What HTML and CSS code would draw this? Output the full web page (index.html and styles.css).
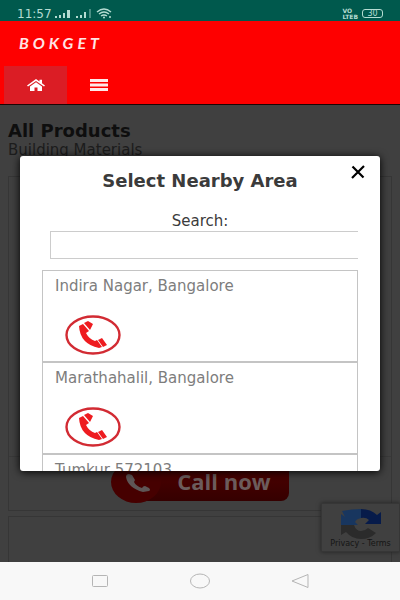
FILE: index.html
```html
<!DOCTYPE html>
<html lang="en">
<head>
<meta charset="utf-8">
<meta name="viewport" content="width=device-width, initial-scale=1">
<title>Bokget</title>
<link rel="stylesheet" href="styles.css">
</head>
<body>
<div class="status">
  <span class="clock">11:57</span>
  <svg class="signals" width="60" height="12" viewBox="0 0 60 12" fill="#b5dcd2">
    <path d="M1 8h2v2H1zM5 7h2v3H5zM9 5h2v5H9zM13 2h3v8h-3zM22 8h2v2h-2zM26 7h2v3h-2zM30 4h2v6h-2z"/>
    <path d="M35 1h2v9h-2z" opacity=".4"/>
    <path d="M43 4q7-6 14 0M45 6q5-4 10 0M47 8q3-2 6 0" fill="none" stroke="#b5dcd2" stroke-width="1.4"/>
    <circle cx="50" cy="9.500" r="1"/><circle cx="56" cy="9" r="1"/>
  </svg>
  <span class="volte">VO<br>LTE<b>B</b></span>
  <span class="battery">30</span>
</div>
<header>
  <a class="brand" href="#">BOKGET</a>
  <nav class="tabs">
    <a class="tab active" href="#" aria-label="Home">
      <svg width="18" height="12" viewBox="0 0 18 12" fill="#fff"><path d="M9 0 0 6.500l1 1L9 2l8 5.500 1-1-3-2.200V.8h-2.500v1.700z"/><path d="M9 3.200 3 7.400V12h4.500V8.500h3V12H15V7.400z"/></svg>
    </a>
    <button class="tab" type="button" aria-label="Menu">
      <svg width="18" height="12" viewBox="0 0 18 12" fill="#ffe9e9"><path d="M0 0h18v3H0zM0 4.500h18v3H0zM0 9h18v3H0z"/></svg>
    </button>
  </nav>
</header>
<main>
  <h1>All Products</h1>
  <p class="category">Building Materials</p>
  <section class="card">
    <div class="photo"></div>
    <div class="action">
      <button class="call" type="button">
        <svg width="50" height="42" viewBox="0 0 50 42"><ellipse cx="25" cy="21" rx="25" ry="21" fill="#460000"/><path d="M18 13q-3 0-3 3 2 11 17 15l6-1q2-1 0-3l-4-2q-2 0-3 2-6-2-8-6l1-2-3-5z" fill="#5e5656"/></svg>
        <span>Call now</span>
      </button>
    </div>
  </section>
  <section class="card next"></section>
  <aside class="captcha">
    <svg width="42" height="30" viewBox="0 0 42 30">
      <path d="M1 16V5l4 3-3-6q10-2 19-2v9q-5 1-6 4l3 3z" fill="#18365f"/>
      <path d="M21 0q10 0 16 6l4-3v12H25l4-4q-3-3-8-2z" fill="#071b4a"/>
      <path d="M1 16h13q2 6 7 6 4 0 7-3l8 5q-6 6-15 6-9 0-15-7l-5 3z" fill="#2b2b2b"/>
    </svg>
    <small><a href="#">Privacy</a> - <a href="#">Terms</a></small>
  </aside>
  <div class="overlay">
    <div class="dialog" role="dialog" aria-modal="true" aria-labelledby="title">
      <button class="close" type="button" aria-label="Close">
        <svg width="14" height="14" viewBox="0 0 14 14"><path d="M1.500 1.500 12.500 12.500M13 1 1 13" stroke="#000" stroke-width="2.200"/></svg>
      </button>
      <h2 id="title">Select Nearby Area</h2>
      <div class="scroller">
        <label for="search">Search:</label>
        <input id="search" type="text">
        <ul class="areas">
          <li><span>Indira Nagar, Bangalore</span>
            <a href="#" aria-label="Call Indira Nagar"><svg width="56" height="40" viewBox="0 0 56 40"><ellipse cx="28" cy="20" rx="26.500" ry="18.500" fill="#fff" stroke="#d22b33" stroke-width="2.400"/><path d="M14 11 18 9 24 16 21 18Q24 24 30 26L32 25 37 32 34 33Q15 29 14 11Z" fill="#ee1c20"/><path d="M19 8 23 6 28 9 25 15ZM33 25 37 23 42 30 38 32Z" fill="#ee1c20"/></svg></a></li>
          <li><span>Marathahalil, Bangalore</span>
            <a href="#" aria-label="Call Marathahalil"><svg width="56" height="40" viewBox="0 0 56 40"><ellipse cx="28" cy="20" rx="26.500" ry="18.500" fill="#fff" stroke="#d22b33" stroke-width="2.400"/><path d="M14 11 18 9 24 16 21 18Q24 24 30 26L32 25 37 32 34 33Q15 29 14 11Z" fill="#ee1c20"/><path d="M19 8 23 6 28 9 25 15ZM33 25 37 23 42 30 38 32Z" fill="#ee1c20"/></svg></a></li>
          <li><span>Tumkur 572103</span></li>
        </ul>
      </div>
    </div>
  </div>
</main>
<footer class="system">
  <button type="button" aria-label="Recent apps"><svg width="20" height="16" viewBox="0 0 20 16"><rect x="2.500" y="2.500" width="15" height="11" rx="1"/></svg></button>
  <button type="button" aria-label="Home screen"><svg width="20" height="16" viewBox="0 0 20 16"><ellipse cx="10" cy="8" rx="9.500" ry="7"/></svg></button>
  <button type="button" aria-label="Back"><svg width="20" height="16" viewBox="0 0 20 16"><path d="M18 1.500v13L2 8z"/></svg></button>
</footer>
</body>
</html>
```

FILE: styles.css
```css
* { box-sizing: border-box; }
body {
  margin: 0;
  min-height: 100vh;
  display: flex;
  flex-direction: column;
  font-family: "DejaVu Sans", sans-serif;
  font-size: 15px;
  line-height: 18px;
}
button { border: 0; padding: 0; background: none; font: inherit; }
a { color: inherit; text-decoration: none; }
svg { display: block; }

.status {
  height: 21px;
  padding: 6px 17px 0;
  display: flex;
  align-items: center;
  background: #00594d;
  color: #b5dcd2;
}
.clock { font-size: 12px; line-height: 14px; }
.signals { margin-left: 2px; }
.volte { margin-left: auto; font-size: 6px; line-height: 6px; font-weight: bold; }
.battery {
  width: 21px;
  margin-left: 4px;
  border: 1px solid #b5dcd2;
  border-radius: 3px;
  font-size: 8px;
  line-height: 7px;
  text-align: center;
}

header { background: #fe0000; color: #fff; }
.brand {
  display: block;
  padding: 13px 19px;
  font-size: 16px;
  line-height: 18px;
  font-weight: bold;
  font-style: italic;
  font-family: Lato, sans-serif;
  letter-spacing: 4px;
  color: #ffe4e4;
}
.tabs { display: flex; padding: 1px 4px 0; }
.tab {
  width: 63px;
  height: 38px;
  display: flex;
  align-items: center;
  justify-content: center;
}
.tab.active { background: #db1d25; }

main {
  position: relative;
  flex: 1;
  display: flex;
  flex-direction: column;
  padding: 16px 8px 0;
  border-top: 1px solid #1c0505;
  overflow: hidden;
  background: #404040;
}
h1 { margin: 0; font-size: 18px; line-height: 20px; color: #0e0e0e; }
.category { margin: 0 0 17px; font-size: 15px; color: #1c1c1c; }
.card { border: 1px solid #363636; }
.photo { height: 280px; border-bottom: 1px solid #393939; }
.action { display: flex; justify-content: center; padding: 4px 0 7px; }
.call {
  display: flex;
  align-items: center;
  color: #6c5c5c;
  font-size: 22px;
  font-weight: bold;
  font-family: "Open Sans", sans-serif;
}
.call span {
  margin-left: -24px;
  padding: 3px 18px 5px 40px;
  border-radius: 0 8px 8px 0;
  line-height: 30px;
  background: linear-gradient(#500000, #350000);
}
.call svg { position: relative; }
.next { flex: 1; min-height: 46px; margin-top: 5px; border-bottom: 0; }
.captcha {
  position: absolute;
  right: 0;
  bottom: 10px;
  width: 79px;
  padding: 5px 0 2px;
  border: 1px solid #363636;
  background: #404040;
  box-shadow: 0 0 4px #222;
  text-align: center;
}
.captcha svg { margin: 0 auto; }
.captcha small { display: block; font-size: 8px; line-height: 10px; color: #151515; }

.overlay {
  position: absolute;
  inset: 0;
  display: flex;
  padding: 51px 20px 91px;
}
.dialog {
  position: relative;
  flex: 1;
  display: flex;
  flex-direction: column;
  padding: 14px 22px 0;
  border-radius: 3px;
  background: #fff;
  box-shadow: 0 1px 8px #000;
  overflow: hidden;
}
.close { position: absolute; top: 9px; right: 15px; }
h2 { margin: 0 0 20px; font-size: 18px; line-height: 22px; text-align: center; color: #3b3b3b; }
.scroller { flex: 1 1 0; min-height: 0; overflow: hidden; }
label { display: block; text-align: center; color: #3b3b3b; }
input {
  display: block;
  width: 100%;
  height: 28px;
  margin: 1px 0 11px 8px;
  border: 1px solid #ccc;
  background: #fff;
}
.areas { list-style: none; margin: 0; padding: 0; border: 1px solid #c4c4c4; }
.areas li { height: 92px; padding: 6px 12px; border-bottom: 2px solid #c4c4c4; color: #7d7d7d; }
.areas a { display: block; width: 56px; margin: 20px 0 0 10px; }

.system {
  height: 38px;
  display: flex;
  justify-content: center;
  align-items: center;
  gap: 80px;
  background: #f8f8f8;
}
.system svg { fill: none; stroke: #b5b5b5; }
```
